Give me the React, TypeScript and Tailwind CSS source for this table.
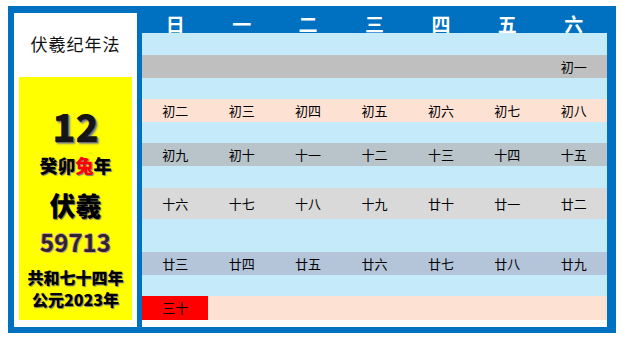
const WEEKDAYS = ['日', '一', '二', '三', '四', '五', '六']

interface CalRow {
  h: string
  bg: string
  cells: string[]
}

const LB = 'bg-[#c5ebfa]'
const PEACH = 'bg-[#fde2d3]'

const rows: CalRow[] = [
  { h: 'h-[22px]', bg: LB, cells: [] },
  { h: 'h-[23px]', bg: 'bg-[#bfbfbf]', cells: ['', '', '', '', '', '', '初一'] },
  { h: 'h-[21px]', bg: LB, cells: [] },
  { h: 'h-[23px]', bg: PEACH, cells: ['初二', '初三', '初四', '初五', '初六', '初七', '初八'] },
  { h: 'h-[21px]', bg: LB, cells: [] },
  { h: 'h-[23px]', bg: 'bg-[#b8c4c9]', cells: ['初九', '初十', '十一', '十二', '十三', '十四', '十五'] },
  { h: 'h-[22px]', bg: LB, cells: [] },
  { h: 'h-[31px]', bg: 'bg-[#d9d9d9]', cells: ['十六', '十七', '十八', '十九', '廿十', '廿一', '廿二'] },
  { h: 'h-[33px]', bg: LB, cells: [] },
  { h: 'h-[23px]', bg: 'bg-[#b4c5da]', cells: ['廿三', '廿四', '廿五', '廿六', '廿七', '廿八', '廿九'] },
  { h: 'h-[21px]', bg: LB, cells: [] },
  { h: 'h-[24px]', bg: PEACH, cells: ['三十', '', '', '', '', '', ''] },
]

const SidePanel = () => (
  <div className="mt-[7px] flex h-[314px] w-[123px] flex-col bg-white px-[5px]">
    <div className="flex h-[64px] items-center justify-center pb-[2px] text-[17px] font-normal tracking-[1px] text-[#111]">
      伏羲纪年法
    </div>
    <div className="flex h-[243px] flex-col items-center bg-[#ffff00] font-black text-black">
      <div className="mt-[30px] text-[38px] leading-[37px] text-[#151515] [text-shadow:1px_1px_0_#6f6f6f,2px_2px_2px_#8a8a8a]">
        12
      </div>
      <div className="mt-[10px] text-[18px] leading-[22px] [text-shadow:1px_1px_1px_#777]">
        癸卯<span className="text-[#ff0000]">兔</span>年
      </div>
      <div className="mt-[14px] text-[26px] leading-[30px] [text-shadow:1px_1px_1px_#666]">
        伏羲
      </div>
      <div className="mt-[9px] text-[24px] font-bold leading-[26px] text-[#2e232e] [text-shadow:1px_1px_0_#c9a58a,-1px_0_0_#c9a58a,0_-1px_0_#c9a58a]">
        59713
      </div>
      <div className="mt-[12px] text-[16px] leading-[20px] [text-shadow:1px_1px_1px_#777]">
        共和七十四年
      </div>
      <div className="mt-[2px] text-[16px] leading-[20px] [text-shadow:1px_1px_1px_#777]">
        公元2023年
      </div>
    </div>
  </div>
)

const Calendar = () => (
  <div className="flex w-[465px] flex-col">
    <div className="grid h-[27px] grid-cols-7">
      {WEEKDAYS.map((d) => (
        <div
          key={d}
          className="pt-[8px] text-center text-[19px] font-bold leading-[19px] text-white"
        >
          {d}
        </div>
      ))}
    </div>
    {rows.map((row, i) => (
      <div key={i} className={`grid grid-cols-7 ${row.h} ${row.bg}`}>
        {Array.from({ length: 7 }).map((_, j) => {
          const label = row.cells[j] || ''
          const red = i === rows.length - 1 && j === 0
          return (
            <div
              key={j}
              className={`flex items-center justify-center text-[13px] text-black ${red ? 'bg-[#ff0000]' : ''}`}
            >
              {label}
            </div>
          )
        })}
      </div>
    ))}
    <div className="h-[7px] bg-white" />
  </div>
)

export default function App() {
  return (
    <div className="min-h-screen bg-white pl-[8px] pt-[6px] font-['Noto_Sans_CJK_SC',sans-serif]">
      <div className="flex w-[608px] gap-[5px] bg-[#0070c0] pb-[6px] pl-[6px] pr-[9px]">
        <SidePanel />
        <Calendar />
      </div>
    </div>
  )
}
